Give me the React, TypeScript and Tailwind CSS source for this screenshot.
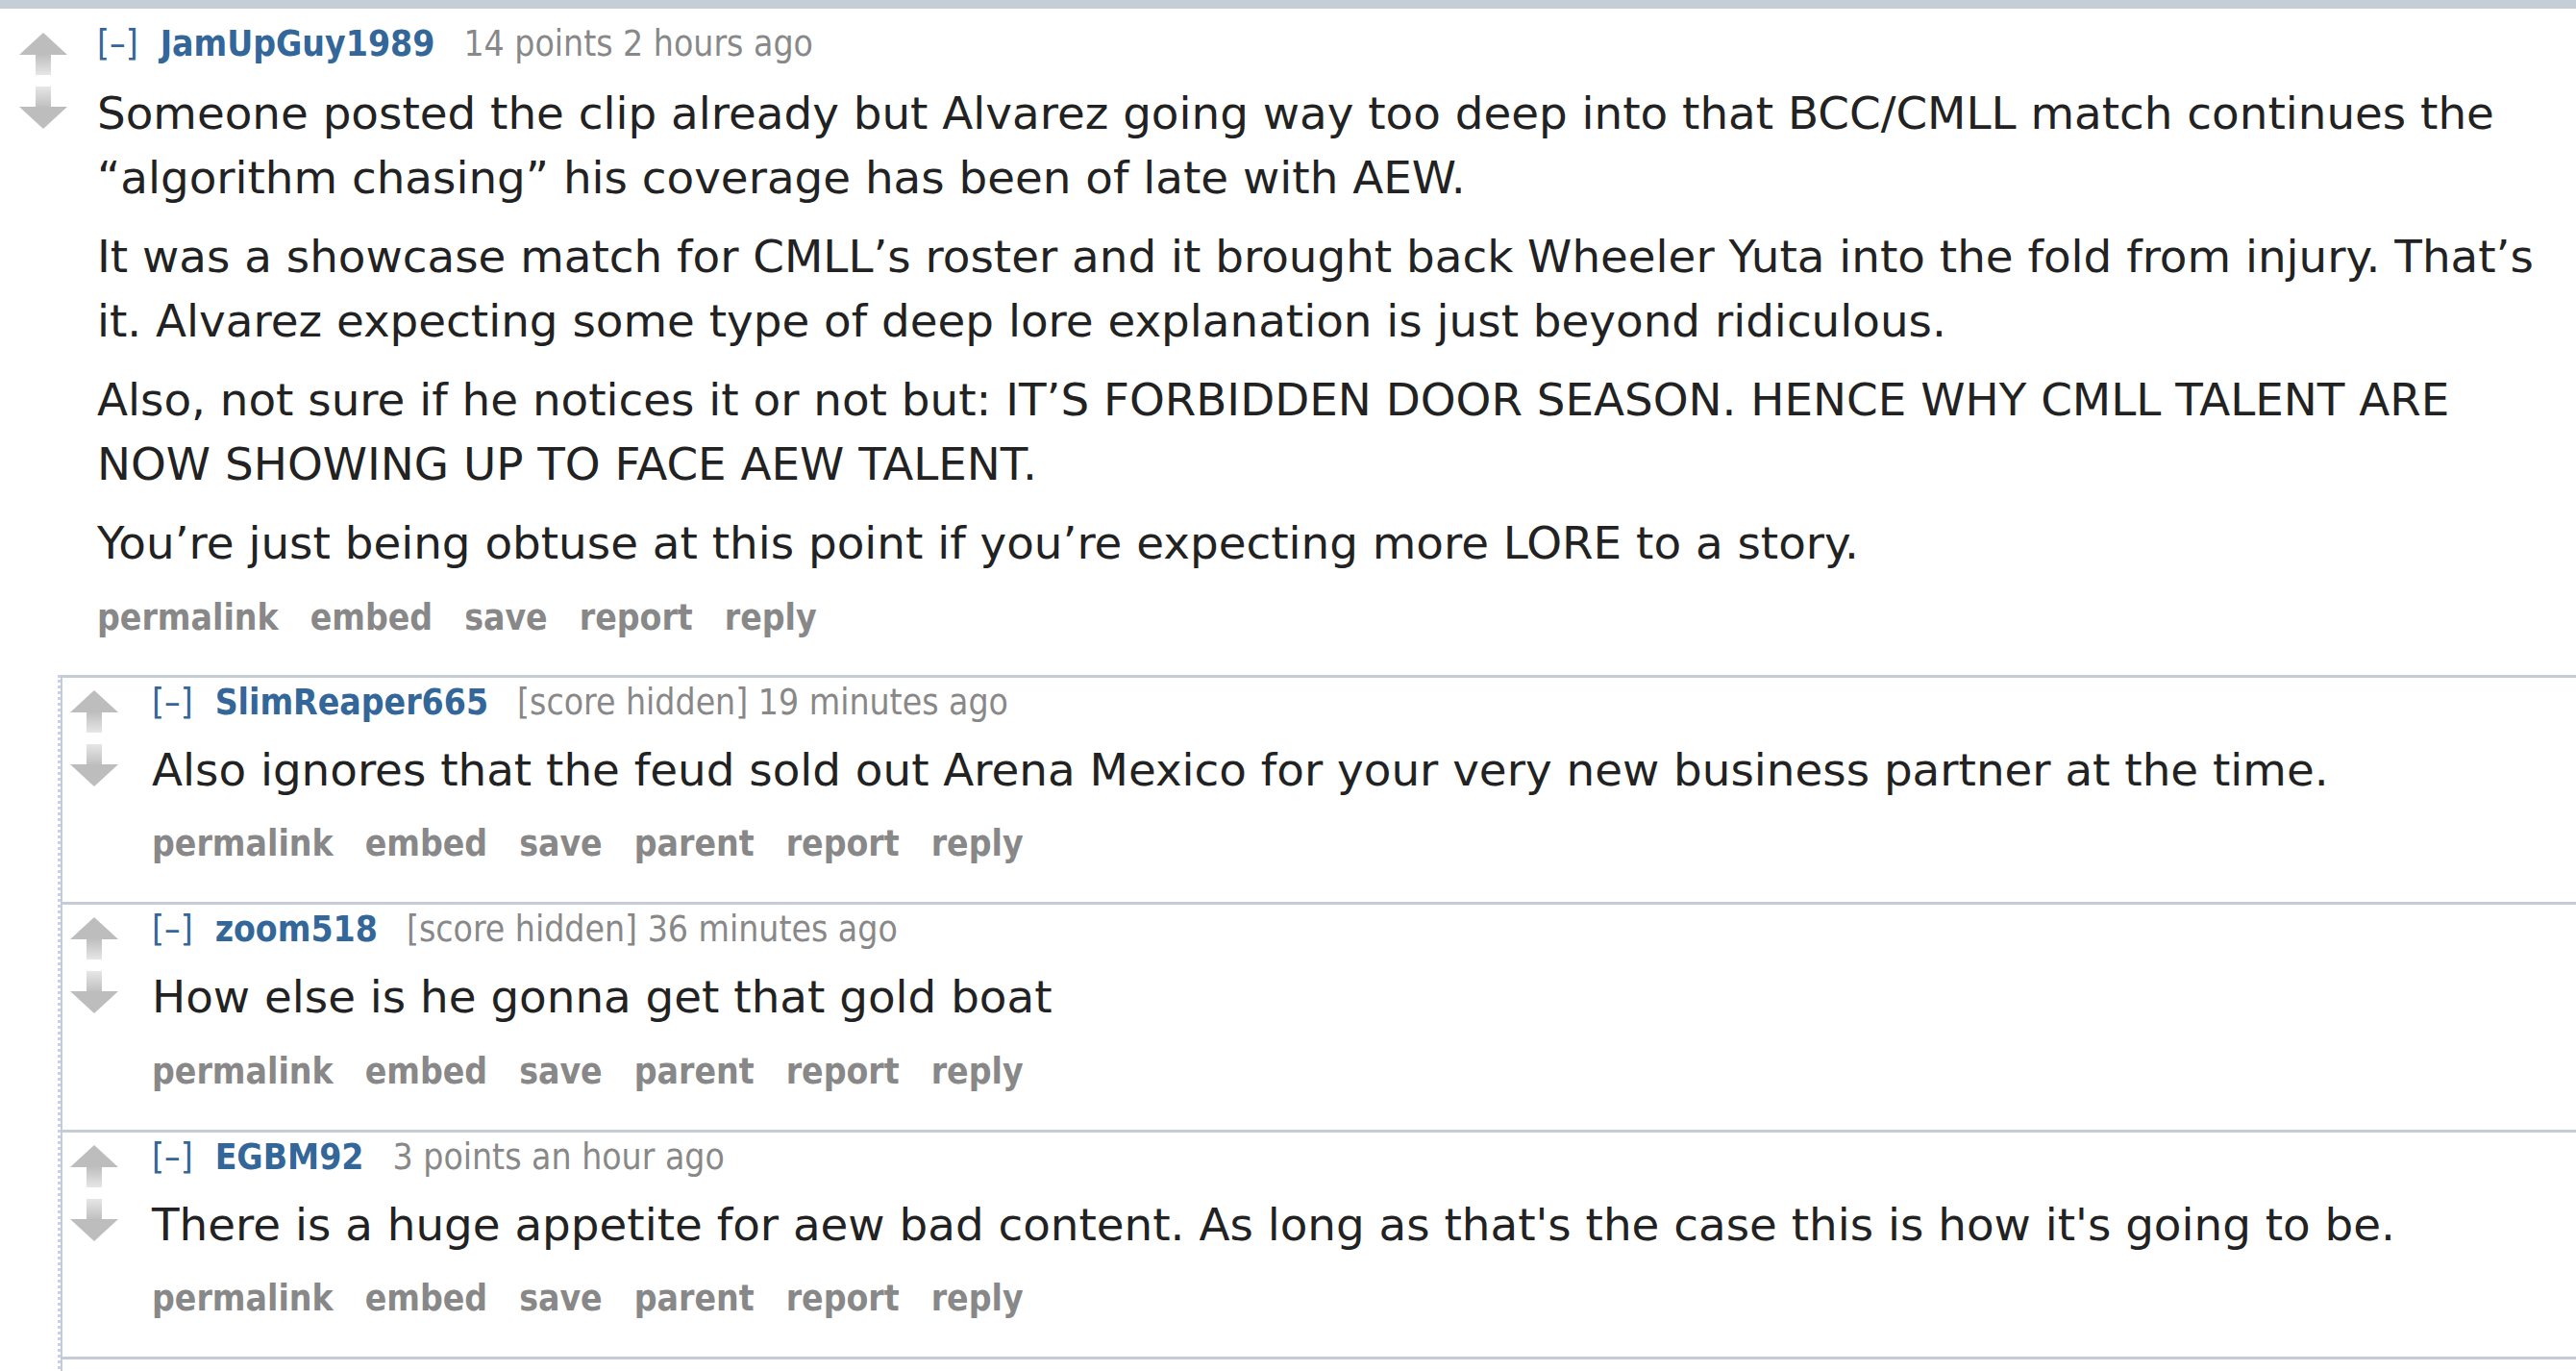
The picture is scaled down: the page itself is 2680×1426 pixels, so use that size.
import { useId } from "react";

type CommentData = {
  author: string;
  score: string;
  time: string;
  paragraphs: string[];
  parent?: boolean;
};

const topComment: CommentData = {
  author: "JamUpGuy1989",
  score: "14 points",
  time: "2 hours ago",
  paragraphs: [
    "Someone posted the clip already but Alvarez going way too deep into that BCC/CMLL match continues the \u201calgorithm chasing\u201d his coverage has been of late with AEW.",
    "It was a showcase match for CMLL\u2019s roster and it brought back Wheeler Yuta into the fold from injury. That\u2019s it. Alvarez expecting some type of deep lore explanation is just beyond ridiculous.",
    "Also, not sure if he notices it or not but: IT\u2019S FORBIDDEN DOOR SEASON. HENCE WHY CMLL TALENT ARE NOW SHOWING UP TO FACE AEW TALENT.",
    "You\u2019re just being obtuse at this point if you\u2019re expecting more LORE to a story.",
  ],
};

const replies: CommentData[] = [
  {
    author: "SlimReaper665",
    score: "[score hidden]",
    time: "19 minutes ago",
    paragraphs: [
      "Also ignores that the feud sold out Arena Mexico for your very new business partner at the time.",
    ],
    parent: true,
  },
  {
    author: "zoom518",
    score: "[score hidden]",
    time: "36 minutes ago",
    paragraphs: ["How else is he gonna get that gold boat"],
    parent: true,
  },
  {
    author: "EGBM92",
    score: "3 points",
    time: "an hour ago",
    paragraphs: [
      "There is a huge appetite for aew bad content. As long as that's the case this is how it's going to be.",
    ],
    parent: true,
  },
];

function VoteArrow({ down }: { down?: boolean }) {
  const id = useId();
  return (
    <svg width="50" height="44" viewBox="0 0 50 44" className="block">
      <defs>
        <linearGradient id={id} x1="0" y1={down ? "1" : "0"} x2="0" y2={down ? "0" : "1"}>
          <stop offset="0" stopColor="#bdbdbd" />
          <stop offset="1" stopColor="#e6e6e6" />
        </linearGradient>
      </defs>
      {down ? (
        <>
          <rect x="17" y="0" width="16" height="23" fill={`url(#${id})`} />
          <polygon points="0,21 50,21 25,44" fill="#bdbdbd" />
        </>
      ) : (
        <>
          <polygon points="25,0 50,23 0,23" fill="#bdbdbd" />
          <rect x="17" y="22" width="16" height="22" fill={`url(#${id})`} />
        </>
      )}
    </svg>
  );
}

function Tagline({ c }: { c: CommentData }) {
  return (
    <div className="flex items-baseline text-[37px] leading-[40px] whitespace-nowrap font-['DejaVu_Sans_Condensed','DejaVu_Sans',sans-serif]">
      <span className="text-[#336699]">[–]</span>
      <span className="ml-[23px] font-bold text-[#336699]">{c.author}</span>
      <span className="ml-[30px] text-[#888888]">
        {c.score} {c.time}
      </span>
    </div>
  );
}

function Buttons({ parent }: { parent?: boolean }) {
  const items = parent
    ? ["permalink", "embed", "save", "parent", "report", "reply"]
    : ["permalink", "embed", "save", "report", "reply"];
  return (
    <ul className="flex gap-[33px] text-[37px] leading-[40px] font-bold text-[#888888] font-['DejaVu_Sans_Condensed','DejaVu_Sans',sans-serif]">
      {items.map((item) => (
        <li key={item}>{item}</li>
      ))}
    </ul>
  );
}

function Body({ paragraphs }: { paragraphs: string[] }) {
  return (
    <div className="flex flex-col gap-[16px] text-[46.8px] leading-[66.5px] text-[#222222] font-['DejaVu_Sans',sans-serif]">
      {paragraphs.map((p, i) => (
        <p key={i}>{p}</p>
      ))}
    </div>
  );
}

function Reply({ c }: { c: CommentData }) {
  return (
    <div className="flex border-t-[3px] border-l-[2px] border-[#c4ccd6] pl-[8px] pb-[40px]">
      <div className="flex flex-col gap-[12px] pt-[13px] shrink-0">
        <VoteArrow />
        <VoteArrow down />
      </div>
      <div className="ml-[35px] flex-1 pt-[6px]">
        <Tagline c={c} />
        <div className="mt-[17px]">
          <Body paragraphs={c.paragraphs} />
        </div>
        <div className="mt-[24px]">
          <Buttons parent={c.parent} />
        </div>
      </div>
    </div>
  );
}

export default function App() {
  return (
    <div className="w-[2680px] h-[1426px] overflow-hidden bg-white border-t-[9px] border-[#c5cdd6]">
      <div className="pl-[20px]">
        <div className="flex">
          <div className="flex flex-col gap-[12px] pt-[25px] shrink-0">
            <VoteArrow />
            <VoteArrow down />
          </div>
          <div className="ml-[31px] flex-1 pt-[17px] pr-[4px]">
            <Tagline c={topComment} />
            <div className="mt-[19px]">
              <Body paragraphs={topComment.paragraphs} />
            </div>
            <div className="mt-[24px]">
              <Buttons />
            </div>
          </div>
        </div>
        <div className="ml-[40px] mt-[39px] border-l-[3px] border-dotted border-[#c8d0f2]">
          {replies.map((c) => (
            <Reply key={c.author} c={c} />
          ))}
          <div className="flex border-t-[3px] border-l-[2px] border-[#c4ccd6] pl-[8px] h-[120px]">
            <div className="pt-[13px]">
              <VoteArrow />
            </div>
          </div>
        </div>
      </div>
    </div>
  );
}
